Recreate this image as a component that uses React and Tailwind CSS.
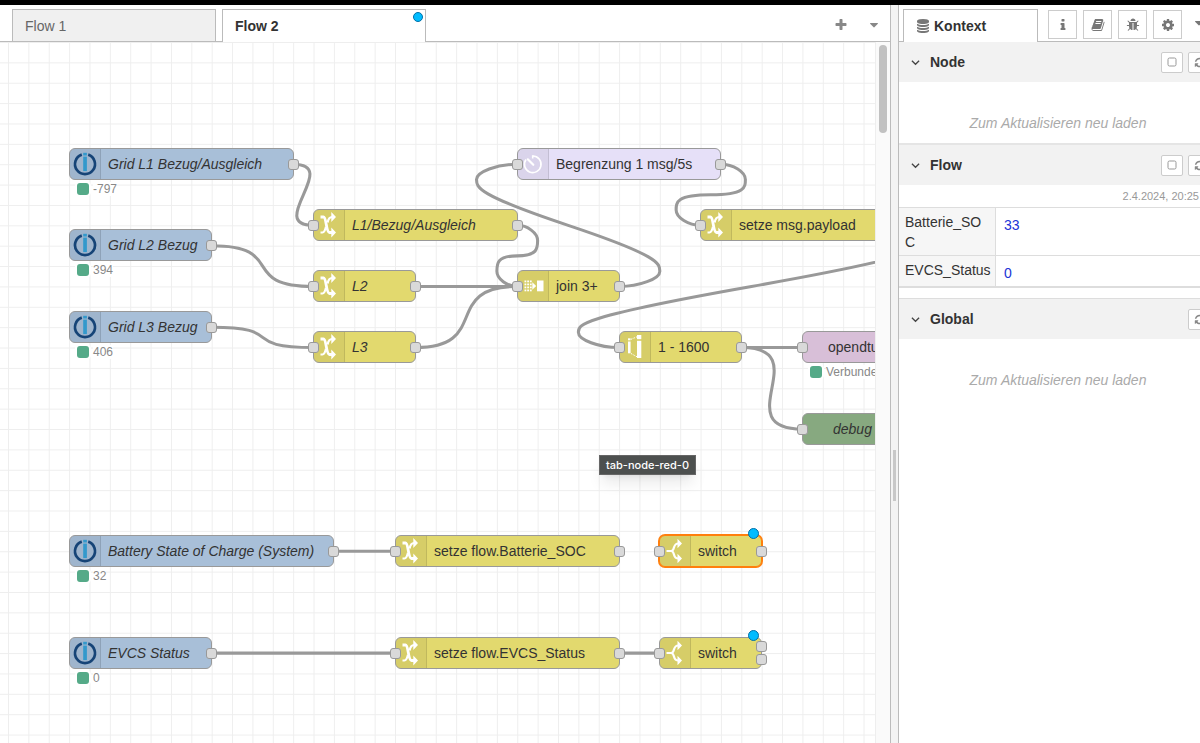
import React from "react";

const UNIT = 1.0185;
const px = (u) => Math.floor(8 + u * UNIT);
const py = (u) => Math.floor(u * UNIT);

const ICONS = {
  database:
    "M896 768q237 0 443-43t325-127v170q0 69-103 128t-280 93.5-385 34.5-385-34.5-280-93.5-103-128v-170q119 84 325 127t443 43zm0 768q237 0 443-43t325-127v170q0 69-103 128t-280 93.5-385 34.5-385-34.5-280-93.5-103-128v-170q119 84 325 127t443 43zm0-384q237 0 443-43t325-127v170q0 69-103 128t-280 93.5-385 34.5-385-34.5-280-93.5-103-128v-170q119 84 325 127t443 43zm0-1152q208 0 385 34.5t280 93.5 103 128v128q0 69-103 128t-280 93.5-385 34.5-385-34.5-280-93.5-103-128v-128q0-69 103-128t280-93.5 385-34.5z",
  info: "M1216 1344v128q0 26-19 45t-45 19h-512q-26 0-45-19t-19-45v-128q0-26 19-45t45-19h64v-384h-64q-26 0-45-19t-19-45v-128q0-26 19-45t45-19h384q26 0 45 19t19 45v576h64q26 0 45 19t19 45zm-128-1152v192q0 26-19 45t-45 19h-256q-26 0-45-19t-19-45v-192q0-26 19-45t45-19h256q26 0 45 19t19 45z",
  book: "M1703 478q40 57 18 129l-275 906q-19 64-76.5 107.5t-122.5 43.5h-923q-77 0-148.5-53.5t-99.5-131.5q-24-67-2-127 0-4 3-27t4-37q1-8-3-21.5t-3-19.5q2-11 8-21t16.5-23.5 16.5-23.5q23-38 45-91.5t30-91.5q3-10 .5-30t-.5-28q3-11 17-28t17-23q21-36 42-92t25-90q1-9-2.5-32t.5-28q4-13 22-30.5t22-22.5q19-26 42.5-84.5t27.5-96.5q1-8-3-25.5t-2-26.5q2-8 9-18t18-23 17-21q8-12 16.5-30.5t15-35 16-36 19.5-32 26.5-23.5 36-11.5 47.5 5.5l-1 3q38-9 51-9h761q74 0 114 56t18 130l-274 906q-36 119-71.5 153.5t-128.5 34.5h-869q-27 0-38 15-11 16-1 43 24 70 144 70h923q29 0 56-15.5t35-41.5l300-987q7-22 5-57 38 15 59 43zm-1064 2q-4 13 2 22.5t20 9.5h608q13 0 25.5-9.5t16.5-22.5l21-64q4-13-2-22.5t-20-9.5h-608q-13 0-25.5 9.5t-16.5 22.5zm-83 256q-4 13 2 22.5t20 9.5h608q13 0 25.5-9.5t16.5-22.5l21-64q4-13-2-22.5t-20-9.5h-608q-13 0-25.5 9.5t-16.5 22.5z",
  bug: "M1696 960q0 26-19 45t-45 19h-224q0 171-67 290l208 209q19 19 19 45t-19 45q-18 19-45 19t-45-19l-198-197q-5 5-15 13t-42 28.5-65 36.5-82 29-97 13v-896h-128v896q-51 0-101.5-13.5t-87-33-66-39-43.5-32.5l-15-14-183 207q-20 21-48 21-24 0-43-16-19-18-20.5-44.5t15.5-46.5l202-227q-58-114-58-274h-224q-26 0-45-19t-19-45 19-45 45-19h224v-294l-173-173q-19-19-19-45t19-45 45-19 45 19l173 173h844l173-173q19-19 45-19t45 19 19 45-19 45l-173 173v294h224q26 0 45 19t19 45zm-480-576h-640q0-133 93.5-226.5t226.5-93.5 226.5 93.5 93.5 226.5z",
  cog: "M1152 896q0-106-75-181t-181-75-181 75-75 181 75 181 181 75 181-75 75-181zm512-109v222q0 12-8 23t-20 13l-185 28q-19 54-39 91 35 50 107 138 10 12 10 25t-9 23q-27 37-99 108t-94 71q-12 0-26-9l-138-108q-44 23-91 38-16 136-29 186-7 28-36 28h-222q-14 0-24.5-8.5t-11.5-21.5l-28-184q-49-16-90-37l-141 107q-10 9-25 9-14 0-25-11-126-114-165-168-7-10-7-23 0-12 8-23 15-21 51-66.5t54-70.5q-27-50-41-99l-183-27q-13-2-21-12.5t-8-23.5v-222q0-12 8-23t19-13l186-28q14-46 39-92-40-57-107-138-10-12-10-24 0-10 9-23 26-36 98.5-107.5t94.5-71.5q13 0 26 10l138 107q44-23 91-38 16-136 29-186 7-28 36-28h222q14 0 24.5 8.5t11.5 21.5l28 184q49 16 90 37l142-107q9-9 24-9 13 0 25 10 129 119 165 170 7 8 7 22 0 12-8 23-15 21-51 66.5t-54 70.5q26 50 41 98l183 28q13 2 21 12.5t8 23.5z",
  plus: "M1600 736v192q0 40-28 68t-68 28h-416v416q0 40-28 68t-68 28h-192q-40 0-68-28t-28-68v-416h-416q-40 0-68-28t-28-68v-192q0-40 28-68t68-28h416v-416q0-40 28-68t68-28h192q40 0 68 28t28 68v416h416q40 0 68 28t28 68z",
  caret: "M1408 704q0 26-19 45l-448 448q-19 19-45 19t-45-19l-448-448q-19-19-19-45t19-45 45-19h896q26 0 45 19t19 45z",
  refresh:
    "M1639 1056q0 5-1 7-64 268-268 434.5t-478 166.5q-146 0-282.5-55t-243.5-157l-129 129q-19 19-45 19t-45-19-19-45v-448q0-26 19-45t45-19h448q26 0 45 19t19 45-19 45l-137 137q71 66 161 102t187 36q134 0 250-65t186-179q11-17 53-117 8-23 30-23h192q13 0 22.5 9.5t9.5 22.5zm25-800v448q0 26-19 45t-45 19h-448q-26 0-45-19t-19-45 19-45l138-138q-148-137-349-137-134 0-250 65t-186 179q-11 17-53 117-8 23-30 23h-199q-13 0-22.5-9.5t-9.5-22.5v-7q65-268 270-434.5t480-166.5q146 0 284 55.5t245 156.5l130-129q19-19 45-19t45 19 19 45z",
};

function Icon({ name, className }) {
  return (
    <svg viewBox="0 0 1792 1792" fill="currentColor" className={className} aria-hidden="true">
      <path d={ICONS[name]} />
    </svg>
  );
}

function NodeIcon({ kind }) {
  return (
    <svg viewBox="0 0 30 30" className="h-[30px] w-[30px]" aria-hidden="true">
      {kind === "iobroker" && (
        <>
          <path d="M11.8 5.6A10 10 0 1 0 18.2 5.6" fill="none" stroke="#164477" strokeWidth="2.7" />
          <rect x="13.2" y="3.8" width="3.7" height="2.7" fill="#3399cc" />
          <rect x="13.2" y="7.6" width="3.7" height="14.5" fill="#3399cc" />
        </>
      )}
      {kind === "change" && (
        <g fill="none" stroke="#fff">
          <path d="M6.5 7H9.5C12.5 7 12 22.5 15.5 22.5H18" strokeWidth="2.8" />
          <path d="M6.500 22.500H8.500C10.500 22.500 11.300 19.500 12 16.800M13.600 12.500C14.200 9.500 15 7 18 7" strokeWidth="2.200" />
          <path d="M17.300 2 22 7 17.300 12Z M17.300 17.500 22 22.500 17.300 27.500Z" fill="#fff" stroke="none" />
        </g>
      )}
      {kind === "delay" && (
        <g fill="none" stroke="#fff" strokeWidth="1.6">
          <path d="M8 10.500A8.300 8.300 0 1 0 14.700 7" />
          <path d="M14.700 6.200V9.500" />
          <path d="M9.800 10.300 15.300 15.800" strokeWidth="2.200" strokeLinecap="round" />
        </g>
      )}
      {kind === "join" && (
        <g fill="#fff">
          {[9.5, 12.5, 15.5, 18.5].map((y) =>
            [6.5, 9.2, 11.9].map((x) => <rect key={`${x}-${y}`} x={x} y={y} width="1.8" height="1.8" />)
          )}
          <path d="M14.300 11.200 18.200 15 14.300 18.800Z" />
          <rect x="19" y="9.500" width="6.500" height="10.800" />
        </g>
      )}
      {kind === "range" && (
        <g fill="#fff">
          <rect x="8" y="6.300" width="2.600" height="2" />
          <rect x="8" y="9.500" width="2.600" height="11.800" />
          <rect x="17" y="3" width="4.300" height="4.200" />
          <rect x="17" y="8.800" width="4.300" height="17.200" />
          <path d="M11 7.300 17 4.800M11 21.500 17 24.800" stroke="#fff" strokeWidth="1" strokeDasharray="1.500 1.200" />
        </g>
      )}
      {kind === "switch" && (
        <g fill="none" stroke="#fff" strokeWidth="2.2">
          <path d="M6.500 15H12" />
          <path d="M18.500 7.500C15 7.500 14.500 9.500 13.800 12Q13 15 11 15Q13 15 13.800 18C14.500 20.500 15 22.500 18.500 22.500" />
          <path d="M17.500 2.800 22 7.500 17.500 12.200Z M17.500 17.800 22 22.500 17.500 27.200Z" fill="#fff" stroke="none" />
        </g>
      )}
    </svg>
  );
}

const NODES = [
  { x: 60, y: 120, w: 220, kind: "iobroker", label: "Grid L1 Bezug/Ausgleich", italic: true, out: [0], status: "-797" },
  { x: 60, y: 200, w: 140, kind: "iobroker", label: "Grid L2 Bezug", italic: true, out: [0], status: "394" },
  { x: 60, y: 280, w: 140, kind: "iobroker", label: "Grid L3 Bezug", italic: true, out: [0], status: "406" },
  { x: 300, y: 180, w: 200, kind: "change", label: "L1/Bezug/Ausgleich", italic: true, input: true, out: [0] },
  { x: 300, y: 240, w: 100, kind: "change", label: "L2", italic: true, input: true, out: [0] },
  { x: 300, y: 300, w: 100, kind: "change", label: "L3", italic: true, input: true, out: [0] },
  { x: 500, y: 120, w: 200, kind: "delay", label: "Begrenzung 1 msg/5s", input: true, out: [0] },
  { x: 500, y: 240, w: 100, kind: "join", label: "join 3+", input: true, out: [0] },
  { x: 680, y: 180, w: 180, kind: "change", label: "setze msg.payload", input: true, out: [0] },
  { x: 600, y: 300, w: 120, kind: "range", label: "1 - 1600", input: true, out: [0] },
  { x: 780, y: 300, w: 160, kind: "mqtt", label: "opendtu", input: true, out: [], status: "Verbunden" },
  { x: 780, y: 380, w: 160, kind: "debug", label: "debug 1", italic: true, input: true, out: [] },
  { x: 60, y: 500, w: 260, kind: "iobroker", label: "Battery State of Charge (System)", italic: true, out: [0], status: "32" },
  { x: 380, y: 500, w: 220, kind: "change", label: "setze flow.Batterie_SOC", input: true, out: [0] },
  { x: 640, y: 500, w: 100, kind: "switch", label: "switch", input: true, out: [0], selected: true, changed: true },
  { x: 60, y: 600, w: 140, kind: "iobroker", label: "EVCS Status", italic: true, out: [0], status: "0" },
  { x: 380, y: 600, w: 220, kind: "change", label: "setze flow.EVCS_Status", input: true, out: [0] },
  { x: 640, y: 600, w: 100, kind: "switch", label: "switch", input: true, out: [-7, 6], changed: true },
];

const FILL = {
  iobroker: "bg-[#a8bfd8]",
  change: "bg-[#e2d96e]",
  join: "bg-[#e2d96e]",
  range: "bg-[#e2d96e]",
  switch: "bg-[#e2d96e]",
  delay: "bg-[#e6e0f8]",
  mqtt: "bg-[#d8bfd8]",
  debug: "bg-[#87a980]",
};

const LABEL_PAD = { mqtt: "pl-[25px]", debug: "pl-[30px]" };

const WIRES = [
  [280, 120, 300, 180],
  [200, 200, 300, 240],
  [200, 280, 300, 300],
  [500, 180, 500, 240],
  [400, 240, 500, 240],
  [400, 300, 500, 240],
  [600, 240, 500, 120],
  [700, 120, 680, 180],
  [860, 180, 600, 300],
  [720, 300, 780, 300],
  [720, 300, 780, 380],
  [320, 500, 380, 500],
  [200, 600, 380, 600],
  [600, 600, 640, 600],
];

function wirePath([ox, oy, tx, ty]) {
  const width = 100;
  const half = 15;
  const dx = tx - ox;
  const dy = ty - oy;
  if (dx > 0) {
    const delta = Math.hypot(dx, dy);
    const s = delta < width ? 0.75 - 0.75 * ((width - delta) / width) : 0.75;
    return `M${ox} ${oy}C${ox + width * s} ${oy} ${tx - width * s} ${ty} ${tx} ${ty}`;
  }
  const s = 0.4 - 0.2 * Math.max(0, (width - Math.min(Math.abs(dx), Math.abs(dy))) / width);
  const dir = dy > 0 ? 1 : -1;
  const near = dy > 0 ? Math.min : Math.max;
  const far = dy > 0 ? Math.max : Math.min;
  const midX = Math.floor(tx - dx / 2);
  const midY = Math.floor(ty - dy / 2);
  const y1 = (ty + midY) / 2;
  const topX = ox + width * s;
  const topY = near(y1 - dy / 2, oy + dir * half);
  const botX = tx - width * s;
  const botY = far(y1, ty - dir * half);
  const x1 = (ox + topX) / 2;
  const cp = [
    [x1, oy],
    [topX, far(oy, topY - dir * half)],
    [x1, near(midY, topY + dir * half)],
    [botX, far(midY, botY - dir * half)],
    [(tx + botX) / 2, ty],
  ];
  if (cp[2][1] === topY + dir * half) {
    if (Math.abs(dy) < half * 10) {
      cp[1][1] = topY - (dir * half) / 2;
      cp[3][1] = botY - (dir * half) / 2;
    }
    cp[2][0] = topX;
  }
  return `M${ox} ${oy}C${cp[0]} ${cp[1]} ${topX} ${topY}S${cp[2]} ${midX} ${midY}S${cp[3]} ${botX} ${botY}S${cp[4]} ${tx} ${ty}`;
}

function Port({ left, top }) {
  return (
    <span
      className="absolute h-[11px] w-[11px] rounded-[3px] border border-[#999] bg-[#d9d9d9]"
      style={{ left: left - 5, top: top - 5 }}
    />
  );
}

function FlowNode({ node }) {
  const left = px(node.x);
  const mid = py(node.y);
  const width = px(node.x + node.w) - left + 1;
  const hasIcon = !(node.kind in LABEL_PAD);
  return (
    <>
      <div
        className={`absolute flex h-8 items-stretch overflow-hidden rounded-md border ${FILL[node.kind]} ${
          node.selected ? "border-[#ff7f0e] ring-1 ring-[#ff7f0e]" : "border-[#999]"
        }`}
        style={{ left, top: mid - 16, width }}
      >
        {hasIcon && (
          <span className="w-[31px] shrink-0 border-r border-black/10 bg-black/5">
            <NodeIcon kind={node.kind} />
          </span>
        )}
        <span
          className={`self-center whitespace-nowrap text-sm text-[#333] ${node.italic ? "italic" : ""} ${
            LABEL_PAD[node.kind] || "pl-[7px]"
          }`}
        >
          {node.label}
        </span>
      </div>
      {node.input && <Port left={left} top={mid} />}
      {node.out.map((dy) => (
        <Port key={dy} left={left + width - 1} top={mid + dy} />
      ))}
      {node.changed && (
        <span
          className="absolute h-[11px] w-[11px] rounded-full border border-[#0070a8] bg-[#00bcff]"
          style={{ left: left + width - 14, top: mid - 23 }}
        />
      )}
      {node.status && (
        <div className="absolute flex items-center gap-1" style={{ left: left + 8, top: mid + 18 }}>
          <span className="h-3 w-3 rounded-[3px] bg-[#55aa88] ring-2 ring-white" />
          <span className="bg-white text-xs leading-[14px] text-[#888]">{node.status}</span>
        </div>
      )}
    </>
  );
}

function Workspace() {
  return (
    <main className="relative min-w-0 flex-1 overflow-hidden bg-white">
      <svg className="absolute inset-0 h-full w-full" aria-hidden="true">
        <defs>
          <pattern id="grid" width="20" height="20" patternUnits="userSpaceOnUse" patternTransform="translate(8 0) scale(1.0185)">
            <path d="M0.500 0V20M0 0.500H20" stroke="#eee" strokeWidth="1" fill="none" />
          </pattern>
        </defs>
        <rect width="100%" height="100%" fill="url(#grid)" />
        <g transform="translate(8 0) scale(1.0185)" fill="none" stroke="#999" strokeWidth="3">
          {WIRES.map((w) => (
            <path key={w.join()} d={wirePath(w)} />
          ))}
        </g>
      </svg>
      {NODES.map((n) => (
        <FlowNode key={`${n.x}-${n.y}`} node={n} />
      ))}
      <div
        role="tooltip"
        className="absolute left-[599px] top-[413px] border border-[#666] bg-[#4d504f] px-1.5 font-['Inter',sans-serif] text-[11px] leading-[18px] font-medium text-white shadow-lg"
      >
        tab-node-red-0
      </div>
    </main>
  );
}

function TabBar() {
  return (
    <nav className="flex h-[37px] shrink-0 border-b border-[#bbb] pl-3">
      <button type="button" className="mt-1 mr-1.5 h-8 w-[204px] border border-b-0 border-[#bbb] bg-[#f0f0f0] px-3 text-left text-sm text-[#666]">
        Flow 1
      </button>
      <button type="button" className="relative mt-1 h-[33px] w-[204px] border border-b-0 border-[#bbb] bg-white px-3 text-left text-sm font-bold text-[#333]">
        Flow 2
        <span className="absolute right-[2px] top-[2px] h-[10px] w-[10px] rounded-full border border-[#0070a8] bg-[#00bcff]" />
      </button>
      <div className="ml-auto flex items-center gap-[19px] pt-[3px] pr-[9px] text-[#888]">
        <button type="button" aria-label="Flow hinzufügen">
          <Icon name="plus" className="h-[14px] w-[14px]" />
        </button>
        <button type="button" aria-label="Flows auflisten">
          <Icon name="caret" className="h-[14px] w-[14px]" />
        </button>
      </div>
    </nav>
  );
}

function Section({ title, pin, children }) {
  return (
    <section>
      <header className="flex h-10 items-center bg-[#f2f2f2] pl-3">
        <svg viewBox="0 0 10 10" className="mr-2.5 h-[9px] w-[9px]" aria-hidden="true">
          <path d="M1 3 5 7 9 3" fill="none" stroke="#444" strokeWidth="1.400" />
        </svg>
        <h2 className="text-sm font-bold text-[#333]">{title}</h2>
        <div className="ml-auto flex gap-[5px] pr-1.5 text-[#888]">
          {pin && (
            <button type="button" aria-label="Automatisch aktualisieren" className="flex h-[21px] w-[22px] items-center justify-center rounded-[2px] border border-[#ccc] bg-white">
              <svg viewBox="0 0 10 10" className="h-[10px] w-[10px]" aria-hidden="true">
                <rect x="1" y="1" width="8" height="8" rx="1.500" fill="none" stroke="#999" />
              </svg>
            </button>
          )}
          <button type="button" aria-label="Aktualisieren" className="flex h-[21px] w-[23px] items-center justify-center rounded-[2px] border border-[#ccc] bg-white">
            <Icon name="refresh" className="h-[11px] w-[11px]" />
          </button>
        </div>
      </header>
      {children}
    </section>
  );
}

const CONTEXT = [
  ["Batterie_SOC", "33"],
  ["EVCS_Status", "0"],
];

function Sidebar() {
  return (
    <aside className="w-[301px] shrink-0 overflow-hidden">
      <div className="w-[318px]">
        <div className="flex h-[37px] border-b border-[#bbb] pl-1">
          <button type="button" className="mt-1 flex h-[33px] w-[135px] items-center border border-b-0 border-[#bbb] bg-white pl-3 text-sm font-bold text-[#333]">
            <Icon name="database" className="mr-1 h-[14px] w-[14px] text-[#777]" />
            Kontext
          </button>
          <div className="mt-[5px] ml-2.5 flex gap-1.5 text-[#777]">
            {["info", "book", "bug", "cog"].map((name) => (
              <button key={name} type="button" aria-label={name} className="flex h-[29px] w-[29px] items-center justify-center border border-[#ccc] bg-white">
                <Icon name={name} className="h-[14px] w-[14px]" />
              </button>
            ))}
          </div>
          <button type="button" aria-label="Weitere" className="ml-2.5 text-[#777]">
            <Icon name="caret" className="h-[14px] w-[14px]" />
          </button>
        </div>
        <Section title="Node" pin>
          <p className="border-b-2 border-[#e5e5e5] pt-[30px] pb-[9px] text-center text-sm leading-[22px] italic text-[#aaa]">Zum Aktualisieren neu laden</p>
        </Section>
        <Section title="Flow" pin>
          <p className="pr-[18px] text-right text-[11px] leading-[22px] text-[#999]">2.4.2024, 20:25</p>
          <table className="w-full table-fixed border-separate border-spacing-0 border-y border-[#ddd] text-sm leading-5">
            <tbody>
              {CONTEXT.map(([key, value]) => (
                <tr key={key} className="align-top">
                  <th scope="row" className="w-[97px] border-r border-b border-[#ddd] bg-[#f6f6f6] pt-1 pr-1 pb-[3px] pl-1.5 text-left font-normal break-all text-[#333]">
                    {key}
                  </th>
                  <td className="border-b border-[#ddd] pt-[7px] pb-[3px] pl-2 text-[#2033d6]">{value}</td>
                </tr>
              ))}
            </tbody>
          </table>
          <div className="h-[11px] border-b border-[#ddd]" />
        </Section>
        <Section title="Global">
          <p className="pt-[30px] text-center text-sm leading-[22px] italic text-[#aaa]">Zum Aktualisieren neu laden</p>
        </Section>
      </div>
    </aside>
  );
}

export default function App() {
  return (
    <div className="flex h-screen flex-col overflow-hidden border-t-[5px] border-black bg-white font-['Liberation_Sans',Arial,sans-serif]">
      <div className="flex min-h-0 flex-1">
        <div className="flex min-w-0 flex-1 flex-col">
          <TabBar />
          <div className="flex min-h-0 flex-1">
            <Workspace />
            <div className="w-[15px] shrink-0 border-l border-[#eee] bg-[#fafafa] pt-[3px] pl-[3px]">
              <div className="h-[88px] w-2 rounded-full bg-[#c1c1c1]" />
            </div>
          </div>
        </div>
        <div className="flex w-[9px] shrink-0 justify-center border-x border-[#bbb] bg-[#f3f3f3] pt-[445px]">
          <div className="h-[51px] w-[3px] bg-[#c8c8c8]" />
        </div>
        <Sidebar />
      </div>
    </div>
  );
}
